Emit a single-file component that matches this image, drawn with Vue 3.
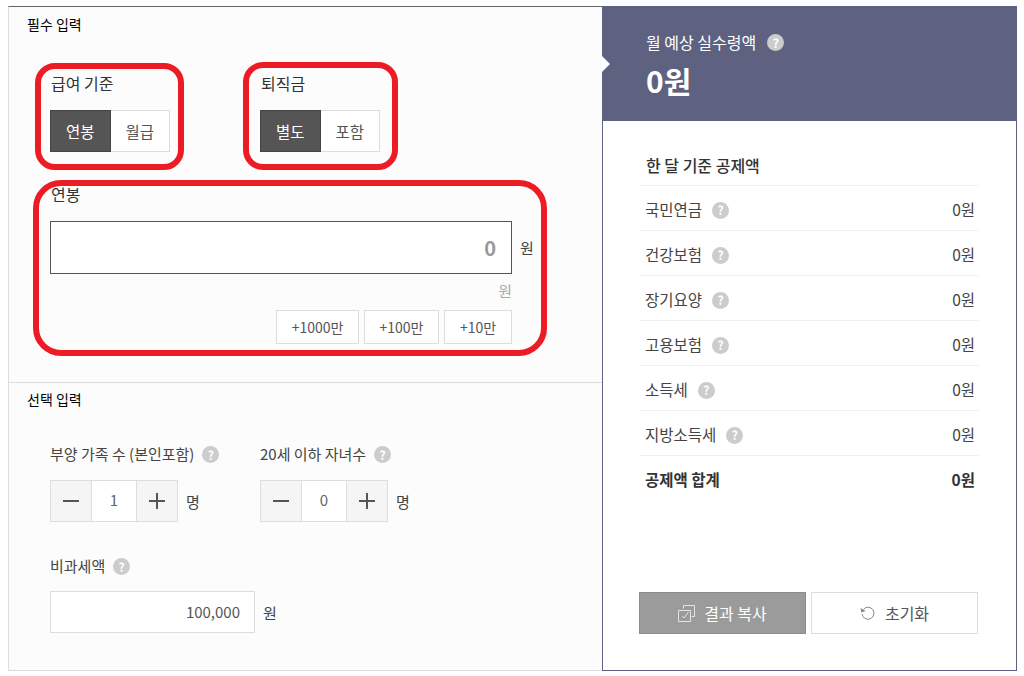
<script setup>
const deductions = [
  { label: '국민연금', amount: '0원' },
  { label: '건강보험', amount: '0원' },
  { label: '장기요양', amount: '0원' },
  { label: '고용보험', amount: '0원' },
  { label: '소득세', amount: '0원' },
  { label: '지방소득세', amount: '0원' },
]

const steppers = [
  { label: '부양 가족 수 (본인포함)', value: 1 },
  { label: '20세 이하 자녀수', value: 0 },
]

const quickAdd = ['+1000만', '+100만', '+10만']
</script>

<template>
  <div class="calc">
    <div class="inputs">
      <section class="required">
        <h2 class="section-title">필수 입력</h2>
        <div class="toggles">
          <div class="toggle-field">
            <div class="big-label">급여 기준</div>
            <div class="toggle">
              <span class="toggle-btn on">연봉</span>
              <span class="toggle-btn">월급</span>
            </div>
          </div>
          <div class="toggle-field">
            <div class="big-label">퇴직금</div>
            <div class="toggle">
              <span class="toggle-btn on">별도</span>
              <span class="toggle-btn">포함</span>
            </div>
          </div>
        </div>
        <div class="salary">
          <div class="big-label">연봉</div>
          <div class="salary-row">
            <div class="salary-input">0</div>
            <span class="unit">원</span>
          </div>
          <div class="salary-hint">원</div>
          <div class="quick">
            <span v-for="q in quickAdd" :key="q" class="quick-btn">{{ q }}</span>
          </div>
        </div>
        <div class="mark mark-basis"></div>
        <div class="mark mark-severance"></div>
        <div class="mark mark-salary"></div>
      </section>

      <section class="optional">
        <h2 class="section-title">선택 입력</h2>
        <div class="stepper-row">
          <div v-for="s in steppers" :key="s.label" class="stepper-field">
            <div class="label">{{ s.label }} <span class="help">?</span></div>
            <div class="stepper-line">
              <div class="stepper">
                <span class="step-btn">
                  <svg width="16" height="16" viewBox="0 0 16 16"><path d="M0 8h16" stroke="#555" stroke-width="2" /></svg>
                </span>
                <span class="step-value">{{ s.value }}</span>
                <span class="step-btn">
                  <svg width="16" height="16" viewBox="0 0 16 16"><path d="M0 8h16M8 0v16" stroke="#555" stroke-width="2" /></svg>
                </span>
              </div>
              <span class="unit">명</span>
            </div>
          </div>
        </div>
        <div class="label nontax-label">비과세액 <span class="help">?</span></div>
        <div class="nontax-line">
          <div class="nontax-input">100,000</div>
          <span class="unit">원</span>
        </div>
      </section>
    </div>

    <aside class="result">
      <header class="result-head">
        <div class="result-title">월 예상 실수령액 <span class="help">?</span></div>
        <div class="result-total">0원</div>
      </header>
      <div class="result-body">
        <h3 class="deduct-title">한 달 기준 공제액</h3>
        <ul class="deduct-list">
          <li v-for="d in deductions" :key="d.label" class="deduct-row">
            <span class="deduct-name">{{ d.label }} <span class="help">?</span></span>
            <span class="amount">{{ d.amount }}</span>
          </li>
          <li class="deduct-row total">
            <span>공제액 합계</span>
            <span class="amount">0원</span>
          </li>
        </ul>
        <div class="actions">
          <span class="action copy">
            <svg width="17" height="17" viewBox="0 0 17 17" fill="none" stroke="#e4e4e4" stroke-width="1">
              <path d="M5.5 3.5V.5h11v11h-3" />
              <path d="M.5 5.5h12v11H.5z" />
              <path d="M4 11l2 2 4.5-6" />
            </svg>
            결과 복사
          </span>
          <span class="action reset">
            <svg width="16" height="16" viewBox="0 0 16 16" fill="none" stroke="#888" stroke-width="1">
              <path d="M3.5 4.2A6 6 0 1 1 2 9" />
              <path d="M.5 3l.8 4.5L5.6 6z" fill="#888" stroke="none" />
            </svg>
            초기화
          </span>
        </div>
      </div>
    </aside>
  </div>
</template>

<style scoped>
.calc {
  display: flex;
  width: 1009px;
  height: 665px;
  margin: 6px 0 0 8px;
  color: #333;
  font-family: "Noto Sans CJK KR", "Noto Sans", sans-serif;
  font-size: 15px;
}

.inputs {
  width: 594px;
  box-sizing: border-box;
  display: flex;
  flex-direction: column;
  background: #fcfcfc;
  border-top: 1px solid #666;
  border-left: 1px solid #ddd;
  border-bottom: 1px solid #ddd;
}

.required {
  position: relative;
  height: 376px;
  box-sizing: border-box;
  padding: 8px 0 0 41px;
  border-bottom: 1px solid #ddd;
}

.section-title {
  margin: 0 0 0 -23px;
  font-size: 14px;
  line-height: 18px;
  font-weight: 400;
  color: #000;
}

.toggles {
  display: flex;
  gap: 90px;
  margin-top: 39px;
}

.big-label {
  font-size: 16px;
  line-height: 22px;
  margin-left: 1px;
  color: #333;
}

.toggle {
  display: flex;
  margin-top: 16px;
  width: 120px;
  height: 42px;
}

.toggle-btn {
  flex: 1;
  display: flex;
  align-items: center;
  justify-content: center;
  box-sizing: border-box;
  background: #fff;
  border: 1px solid #ddd;
  border-left: 0;
  color: #555;
  font-size: 15.5px;
}

.toggle-btn.on {
  background: #555;
  border: 1px solid #444;
  color: #fff;
}

.salary {
  margin-top: 31px;
}

.salary-row {
  display: flex;
  align-items: center;
  margin-top: 16px;
}

.salary-input {
  width: 462px;
  height: 53px;
  box-sizing: border-box;
  border: 1px solid #555;
  background: #fff;
  padding-right: 15px;
  text-align: right;
  font-size: 20px;
  font-weight: 700;
  line-height: 51px;
  color: #999;
}

.unit {
  margin-left: 8px;
  color: #444;
}

.salary-hint {
  width: 462px;
  margin-top: 6px;
  text-align: right;
  line-height: 22px;
  color: #aaa;
}

.quick {
  display: flex;
  justify-content: flex-end;
  gap: 5px;
  width: 462px;
  margin-top: 8px;
}

.quick-btn {
  height: 34px;
  box-sizing: border-box;
  display: flex;
  align-items: center;
  justify-content: center;
  background: #fff;
  border: 1px solid #ddd;
  color: #555;
  font-size: 14px;
}

.quick-btn:nth-child(1) { width: 83px; }
.quick-btn:nth-child(2) { width: 75px; }
.quick-btn:nth-child(3) { width: 68px; }

.mark {
  position: absolute;
  box-sizing: border-box;
  border: 6px solid #ed1c24;
  border-radius: 20px;
  pointer-events: none;
}

.mark-basis { left: 26px; top: 56px; width: 149px; height: 107px; }
.mark-severance { left: 234px; top: 55px; width: 155px; height: 108px; }
.mark-salary { left: 24px; top: 173px; width: 514px; height: 176px; border-radius: 28px; }

.optional {
  flex: 1;
  padding: 7px 0 0 41px;
}

.stepper-row {
  display: flex;
  margin-top: 35px;
}

.stepper-field {
  width: 210px;
}

.label {
  display: flex;
  align-items: center;
  gap: 8px;
  line-height: 22px;
  color: #444;
  white-space: nowrap;
}

.stepper-line {
  display: flex;
  align-items: center;
  margin-top: 15px;
}

.stepper {
  display: flex;
  width: 128px;
  height: 42px;
  box-sizing: border-box;
  border: 1px solid #ddd;
  background: #fff;
}

.step-btn {
  width: 40px;
  display: flex;
  align-items: center;
  justify-content: center;
  background: #f5f5f5;
}

.step-btn:first-child { border-right: 1px solid #ddd; }
.step-btn:last-child { border-left: 1px solid #ddd; }

.step-value {
  flex: 1;
  text-align: center;
  line-height: 38px;
  color: #666;
}

.nontax-label {
  margin-top: 33px;
}

.nontax-line {
  display: flex;
  align-items: center;
  margin-top: 14px;
}

.nontax-input {
  width: 205px;
  height: 42px;
  box-sizing: border-box;
  background: #fff;
  border: 1px solid #ddd;
  padding-right: 14px;
  text-align: right;
  line-height: 40px;
  color: #555;
}

.help {
  display: inline-flex;
  align-items: center;
  justify-content: center;
  width: 17px;
  height: 17px;
  margin-top: 1px;
  border-radius: 50%;
  background: #ccc;
  color: #fff;
  font-size: 12px;
  font-weight: 700;
  line-height: 1;
}

.result {
  width: 415px;
  display: flex;
  flex-direction: column;
}

.result-head {
  position: relative;
  height: 115px;
  box-sizing: border-box;
  padding: 24px 0 0 44px;
  background: #5e6180;
  color: #fff;
}

.result-head::before {
  content: "";
  position: absolute;
  left: 0;
  top: 50px;
  border-left: 8px solid #fff;
  border-top: 8px solid transparent;
  border-bottom: 8px solid transparent;
}

.result-title {
  display: flex;
  align-items: center;
  gap: 11px;
  font-size: 16px;
  line-height: 24px;
}

.result-total {
  margin-top: 6px;
  font-size: 30px;
  font-weight: 700;
  line-height: 40px;
}

.result-body {
  flex: 1;
  display: flex;
  flex-direction: column;
  box-sizing: border-box;
  padding: 32px 37px 36px 36px;
  border: 1px solid #5e6180;
  border-top: 0;
}

.deduct-title {
  margin: 0;
  padding: 0 0 8px 7px;
  font-size: 16px;
  font-weight: 500;
  line-height: 24px;
  color: #333;
}

.deduct-list {
  list-style: none;
  margin: 0;
  padding: 0;
}

.deduct-row {
  display: flex;
  align-items: center;
  justify-content: space-between;
  height: 45px;
  box-sizing: border-box;
  padding: 2px 4px 0 6px;
  border-top: 1px solid #f0f0f0;
  color: #444;
  font-size: 15.5px;
}

.deduct-name {
  display: inline-flex;
  align-items: center;
  gap: 10px;
}

.deduct-name .help {
  margin-top: 2px;
}

.deduct-row.total {
  font-weight: 700;
  color: #333;
}

.actions {
  display: flex;
  gap: 5px;
  margin-top: auto;
  width: 339px;
}

.action {
  flex: 1;
  height: 42px;
  box-sizing: border-box;
  display: flex;
  align-items: center;
  justify-content: center;
  gap: 9px;
  font-size: 16px;
}

.copy {
  background: #9b9b9b;
  border: 1px solid #8c8c8c;
  color: #fff;
}

.reset {
  background: #fff;
  border: 1px solid #ddd;
  color: #555;
}
</style>
